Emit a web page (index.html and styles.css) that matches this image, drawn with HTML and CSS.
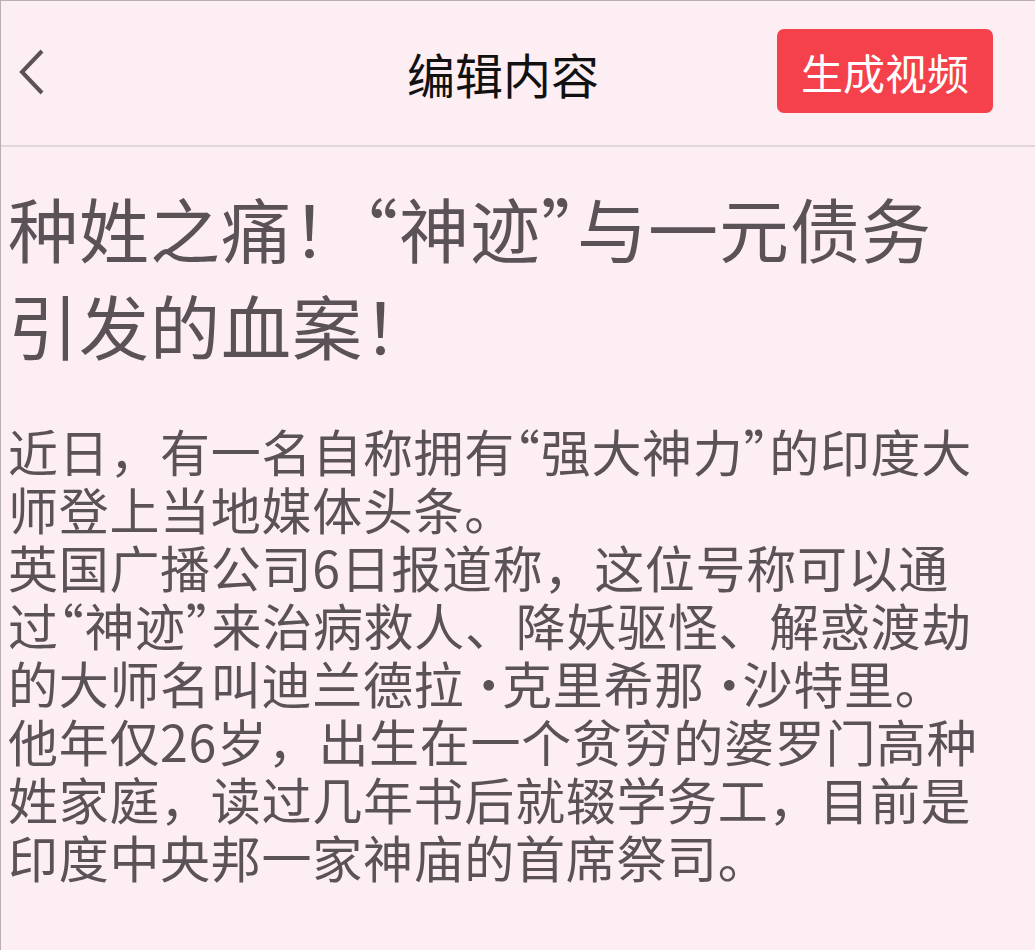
FILE: index.html
```html
<!DOCTYPE html>
<html lang="zh-CN">
<head>
    <meta charset="UTF-8">
    <meta name="viewport" content="width=device-width, initial-scale=1.0">
    <title>编辑内容</title>
    <link rel="stylesheet" href="styles.css">
</head>
<body>
    <div class="pg">
    <div class="hd">
        <a class="bk" href="#">
            <svg width="30" height="48" viewBox="0 0 30 48"><path d="M26 2 L6 23 L26 44" fill="none" stroke="#5b5157" stroke-width="4"/></svg>
        </a>
        <div class="tt">编辑内容</div>
        <button class="gb">生成视频</button>
    </div>
    <div class="ct">
        <h1 class="hl">种姓之痛！<span class="q">“</span>神迹<span class="q">”</span>与一元债务引发的血案！</h1>
        <div class="tx">
            <p>近日，有一名自称拥有<span class="q">“</span>强大神力<span class="q">”</span>的印度大师登上当地媒体头条。</p>
            <p>英国广播公司6日报道称，这位号称可以通过<span class="q">“</span>神迹<span class="q">”</span>来治病救人、降妖驱怪、解惑渡劫的大师名叫迪兰德拉<span class="d">·</span>克里希那<span class="d">·</span>沙特里。</p>
            <p>他年仅26岁，出生在一个贫穷的婆罗门高种姓家庭，读过几年书后就辍学务工，目前是印度中央邦一家神庙的首席祭司。</p>
        </div>
    </div>
    </div>
</body>
</html>
```
FILE: styles.css
```css
body {
    margin: 0;
    background-color: #fdeef4;
    font-family: "Noto Sans CJK SC", sans-serif;
}
.pg {
    min-height: 950px;
    box-sizing: border-box;
    border-top: 1px solid #b9aeb4;
    border-left: 1px solid #b9aeb4;
}
.hd {
    display: grid;
    grid-template-columns: 1fr auto 1fr;
    align-items: center;
    height: 144px;
    padding: 0 42px 0 12px;
    border-bottom: 2px solid #e3d6dd;
}
.bk {
    display: flex;
    align-items: center;
    justify-self: start;
    padding-left: 3px;
}
.tt {
    font-size: 48px;
    color: #111;
}
.gb {
    justify-self: end;
    width: 216px;
    height: 84px;
    margin-top: -4px;
    background-color: #f5414b;
    color: white;
    border: none;
    border-radius: 7px;
    font-family: inherit;
    font-size: 42px;
    cursor: pointer;
}
.ct {
    padding: 0 41px 0 7px;
    color: #5a5256;
}
.hl {
    margin: 32px 0 0;
    font-size: 70px;
    font-weight: normal;
    line-height: 97px;
    letter-spacing: 1px;
}
.tx {
    margin-top: 48px;
    font-size: 50px;
    line-height: 58px;
    letter-spacing: 0.7px;
}
.tx p {
    margin: 0;
}
.q {
    font-feature-settings: "halt" 1;
}
.d {
    font-feature-settings: "halt" 1;
    padding-left: 12px;
}
```
